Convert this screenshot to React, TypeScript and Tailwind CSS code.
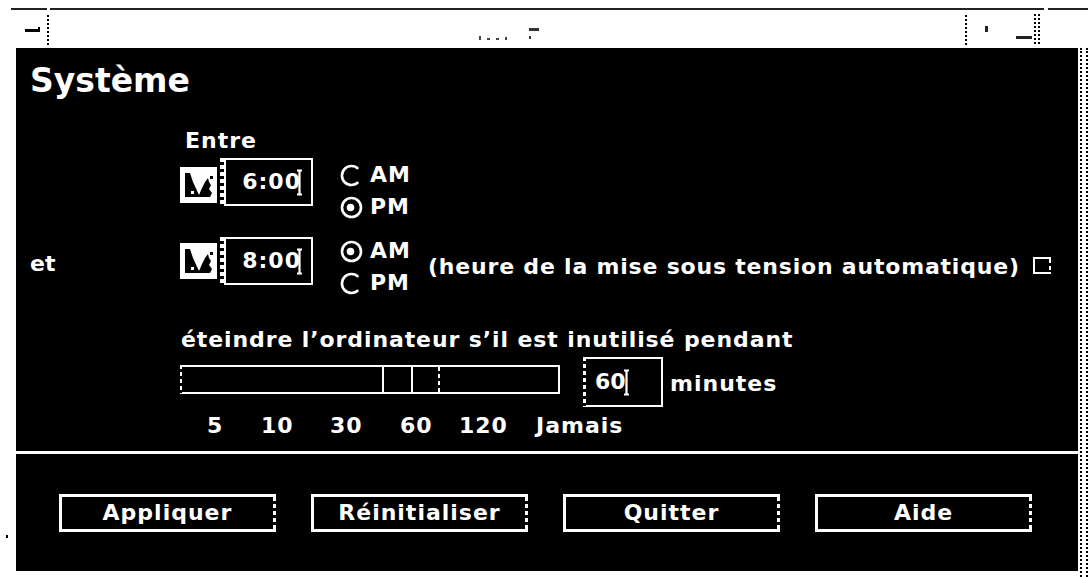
import React from "react";

// White dashed vertical edge used on the Motif-like fields and buttons
function DashV({ className = "" }: { className?: string }) {
  return (
    <div
      className={
        "self-stretch bg-[image:repeating-linear-gradient(to_bottom,#fff_0px,#fff_4px,transparent_4px,transparent_7px)] " +
        className
      }
    />
  );
}

function SpinIcon() {
  return (
    <svg width="37" height="36" viewBox="0 0 37 36" className="block">
      <rect x="0" y="0" width="37" height="36" fill="#fff" />
      <path
        d="M5 6 L10 6 L13 15 L19 28 L22 21 L25 15 L28 11 L29 15 L31 18 L29 22 L32 26 L30 30 L5 30 Z"
        fill="#000"
      />
      <rect x="30" y="9" width="3" height="3" fill="#000" />
      <rect x="11" y="24" width="3" height="3" fill="#fff" />
    </svg>
  );
}

function Cursor() {
  return (
    <svg width="7" height="27" viewBox="0 0 7 27" className="block">
      <path d="M1 1.5 H6 M3.5 1.5 V25.5 M1 25.5 H6" stroke="#fff" strokeWidth="2.2" fill="none" />
    </svg>
  );
}

function Radio({ on }: { on: boolean }) {
  return (
    <svg width="23" height="23" viewBox="0 0 23 23" className="block shrink-0">
      {on ? (
        <>
          <circle cx="11.5" cy="11.5" r="9.5" stroke="#fff" strokeWidth="2.6" fill="none" />
          <circle cx="10.5" cy="11.5" r="3.8" fill="#fff" />
        </>
      ) : (
        <path d="M18.2 4.8 A9.5 9.5 0 1 0 18.2 18.2" stroke="#fff" strokeWidth="2.6" fill="none" />
      )}
    </svg>
  );
}

function AmPm({ am }: { am: boolean }) {
  return (
    <div className="flex w-[80px] flex-col gap-[10px]">
      <div className="flex h-[22px] items-center gap-[7px]">
        <Radio on={am} />
        <span className="leading-none tracking-[1px]">AM</span>
      </div>
      <div className="flex h-[22px] items-center gap-[7px]">
        <Radio on={!am} />
        <span className="leading-none tracking-[1px]">PM</span>
      </div>
    </div>
  );
}

function TimeField({ value }: { value: string }) {
  return (
    <div className="flex h-[48px] w-[93px]">
      <DashV className="w-[4px]" />
      <div className="flex flex-1 items-center justify-end border-[2px] border-white pr-[8px]">
        <span className="leading-none tracking-[1px]">{value}</span>
        <div className="-ml-[5px]">
          <Cursor />
        </div>
      </div>
    </div>
  );
}

function Button({ label }: { label: string }) {
  return (
    <div className="flex h-[38px] w-[217px] border-y-[3px] border-l-[3px] border-white">
      <div className="flex flex-1 items-center justify-center leading-none tracking-[1px]">{label}</div>
      <DashV className="w-[3px]" />
    </div>
  );
}

export default function App() {
  return (
    <div className="flex h-[577px] w-[1091px] flex-col overflow-hidden bg-white font-[family-name:'DejaVu_Sans',sans-serif] font-bold text-white">
      {/* window frame: title strip */}
      <div className="flex h-[48px] shrink-0 flex-col">
        <div className="mt-[8px] flex h-[2px]">
          <div className="ml-[11px] w-[36px] bg-[#222]" />
          <div className="ml-[3px] w-[994px] bg-[#222]" />
          <div className="ml-[4px] w-[40px] bg-[#222]" />
        </div>
        <div className="flex h-[38px]">
          <div className="ml-[25px] mt-[17px] flex h-[5px] w-[17px] items-end">
            <div className="h-[3px] w-[13px] bg-black" />
            <div className="h-[5px] w-[2px] bg-black" />
          </div>
          <div className="ml-[5px] mt-[5px] h-[30px] w-[2px] border-l-[2px] border-dotted border-black" />
          <div className="ml-[430px] mt-[24px] flex h-[6px] items-end gap-[6px]">
            <div className="h-[4px] w-[2px] bg-[#444]" />
            <div className="h-[2px] w-[3px] bg-[#444]" />
            <div className="h-[2px] w-[3px] bg-[#444]" />
            <div className="h-[3px] w-[2px] bg-[#444]" />
          </div>
          <div className="ml-[22px] mt-[18px] flex flex-col gap-[5px]">
            <div className="h-[3px] w-[10px] bg-[#333]" />
            <div className="h-[3px] w-[2px] bg-[#333]" />
          </div>
          <div className="ml-[426px] mt-[5px] h-[30px] w-[2px] border-l-[2px] border-dotted border-black" />
          <div className="ml-[18px] mt-[16px] h-[6px] w-[3px] bg-[#222]" />
          <div className="ml-[28px] mt-[26px] h-[3px] w-[16px] bg-[#222]" />
          <div className="ml-[2px] mt-[4px] h-[30px] w-[6px] border-x-[2px] border-dotted border-black" />
        </div>
      </div>

      <div className="flex flex-1">
        {/* left margin with stray pixel */}
        <div className="flex w-[16px] shrink-0 flex-col">
          <div className="ml-[6px] mt-[487px] h-[3px] w-[2px] bg-black" />
        </div>

        {/* dialog body */}
        <div className="flex h-[523px] w-[1062px] shrink-0 flex-col bg-black text-[22px]">
          <div className="ml-[14px] mt-[16px] h-[33px] text-[33px] leading-none">Système</div>

          <div className="ml-[169px] mt-[33px] h-[22px] leading-none tracking-[1px]">Entre</div>

          {/* first time */}
          <div className="ml-[164px] mt-[6px] flex h-[60px] items-start">
            <div className="mt-[9px]">
              <SpinIcon />
            </div>
            <div className="ml-[3px]">
              <TimeField value="6:00" />
            </div>
            <div className="ml-[27px] mt-[6px]">
              <AmPm am={false} />
            </div>
          </div>

          {/* second time */}
          <div className="ml-[14px] mt-[19px] flex h-[57px] items-start">
            <div className="mt-[16px] w-[150px] leading-none">et</div>
            <div className="mt-[6px]">
              <SpinIcon />
            </div>
            <div className="ml-[3px]">
              <TimeField value="8:00" />
            </div>
            <div className="ml-[27px] mt-[3px]">
              <AmPm am={true} />
            </div>
            <div className="ml-[8px] mt-[19px] whitespace-nowrap leading-none tracking-[0.8px]">
              (heure de la mise sous tension automatique)
            </div>
            <div className="ml-[13px] mt-[20px] flex h-[17px] w-[18px] border-y-[2px] border-l-[2px] border-white">
              <div className="flex-1" />
              <DashV className="w-[2px]" />
            </div>
          </div>

          <div className="ml-[165px] mt-[35px] h-[22px] whitespace-nowrap leading-none tracking-[0.9px]">
            éteindre l’ordinateur s’il est inutilisé pendant
          </div>

          {/* slider + minutes */}
          <div className="ml-[164px] mt-[6px] flex h-[50px] items-start">
            <div className="mt-[8px] flex h-[29px] w-[380px]">
              <DashV className="w-[2px]" />
              <div className="flex flex-1 border-y-[2px] border-r-[2px] border-white">
                <div className="w-[200px]" />
                <div className="w-[31px] border-x-[2px] border-white" />
                <div className="w-[25px]" />
                <DashV className="w-[2px]" />
                <div className="flex-1" />
              </div>
            </div>
            <div className="ml-[23px] flex h-[50px] w-[80px]">
              <DashV className="w-[3px]" />
              <div className="flex flex-1 items-center border-y-[2px] border-r-[2px] border-white pl-[9px]">
                <span className="leading-none">60</span>
                <div className="-ml-[3px]">
                  <Cursor />
                </div>
              </div>
            </div>
            <div className="ml-[7px] mt-[16px] leading-none tracking-[1px]">minutes</div>
          </div>

          {/* scale */}
          <div className="ml-[191px] mt-[8px] flex h-[22px] leading-none tracking-[1px]">
            <span className="w-[54px]">5</span>
            <span className="w-[69px]">10</span>
            <span className="w-[70px]">30</span>
            <span className="w-[59px]">60</span>
            <span className="w-[77px]">120</span>
            <span>Jamais</span>
          </div>

          <div className="mt-[14px] h-[3px] bg-white" />

          <div className="ml-[43px] mt-[40px] flex gap-[35px]">
            <Button label="Appliquer" />
            <Button label="Réinitialiser" />
            <Button label="Quitter" />
            <Button label="Aide" />
          </div>
        </div>

        {/* right frame edge */}
        <div className="ml-[2px] h-[529px] w-[8px] border-x-[2px] border-dotted border-black" />
      </div>
    </div>
  );
}
